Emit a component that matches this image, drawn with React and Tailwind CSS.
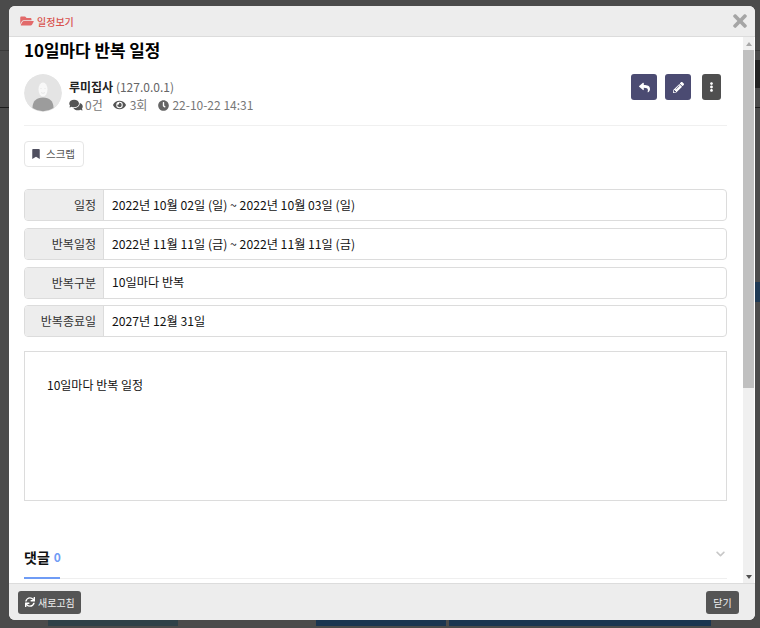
import { FaFolderOpen, FaComments, FaEye, FaClock, FaReply, FaPencilAlt, FaEllipsisV, FaBookmark, FaSync, FaTimes, FaChevronDown } from "react-icons/fa";

const rows = [
  { label: "일정", value: "2022년 10월 02일 (일) ~ 2022년 10월 03일 (일)" },
  { label: "반복일정", value: "2022년 11월 11일 (금) ~ 2022년 11월 11일 (금)" },
  { label: "반복구분", value: "10일마다 반복" },
  { label: "반복종료일", value: "2027년 12월 31일" },
];

function Avatar() {
  return (
    <svg width="38" height="38" viewBox="0 0 38 38" className="rounded-full shrink-0">
      <circle cx="19" cy="19" r="19" fill="#e4e4e4" />
      <path d="M8.500 34c0-7 4-10.500 10.500-10.500S29.500 27 29.500 34a19 19 0 0 1-21 0z" fill="#9c9c9c" />
      <ellipse cx="19" cy="15.500" rx="4.500" ry="7" fill="#f8f8f8" />
      <circle cx="17" cy="14.500" r="0.400" fill="#d0d0d0" />
      <circle cx="21" cy="14.500" r="0.400" fill="#d0d0d0" />
      <path d="M17 18.500c1.200 1 2.800 1 4 0" stroke="#d4d4d4" strokeWidth="0.500" fill="none" />
    </svg>
  );
}

function InfoRow({ label, value }) {
  return (
    <div className="flex h-8 border border-[#dcdcdc] rounded-[4px] overflow-hidden">
      <div className="w-[79px] shrink-0 bg-[#ededed] border-r border-[#dcdcdc] flex items-center justify-end pr-[7px] text-[#333]">
        {label}
      </div>
      <div className="flex-1 flex items-center pl-2 text-[12.2px] text-[#111]">{value}</div>
    </div>
  );
}

export default function App() {
  return (
    <div
      className="relative w-[760px] h-[628px] overflow-hidden bg-[#4b4b4b] pt-[6px] pl-[9px]"
      style={{ fontFamily: '"Noto Sans CJK KR", "Noto Sans", sans-serif' }}
    >
      {/* dimmed page behind the modal */}
      <div className="absolute left-0 top-[50px] w-full h-px bg-[#3a3a3a]" />
      <div className="absolute left-0 top-[107px] w-full h-px bg-[#1c1c1c]" />
      <div className="absolute left-[755px] top-[60px] w-[5px] h-[28px] bg-[#222]" />
      <div className="absolute left-[755px] top-[282px] w-[5px] h-[20px] bg-[#1f3a55]" />
      <div className="absolute left-[48px] top-[618px] w-[130px] h-[8px] bg-[#2f4148]" />
      <div className="absolute left-[316px] top-[618px] w-[130px] h-[8px] bg-[#1b3550]" />
      <div className="absolute left-[449px] top-[618px] w-[262px] h-[8px] bg-[#1b3550]" />

      <div className="relative w-[746px] h-[614px] flex flex-col rounded-[6px] overflow-hidden bg-white">
        {/* header */}
        <div className="h-[31px] shrink-0 bg-[#ededed] border-b border-[#dcdcdc] flex items-center justify-between pl-[11px] pr-[6px]">
          <div className="flex items-center gap-[3px] text-[#d9534f] text-[10px] font-medium">
            <FaFolderOpen className="w-[14px] h-[12px] text-[#e26a6a]" />
            <span>일정보기</span>
          </div>
          <FaTimes className="w-[18px] h-[20px] text-[#a5a5a5]" />
        </div>

        {/* body with scrollbar */}
        <div className="flex flex-1 min-h-0">
          <div className="flex-1 min-w-0 pl-[15px] pr-[7px] overflow-hidden text-[12px]">
            <h1 className="text-[16.900px] font-bold leading-[26px] text-black">10일마다 반복 일정</h1>

            <div className="flex items-start justify-between mt-[10px] pt-px pr-[6px] border-b border-[#f0f0f0] h-[53px] w-[703px]">
              <div className="flex items-start gap-[7px]">
                <Avatar />
                <div className="mt-[4px]">
                  <div className="leading-[18px]">
                    <span className="font-bold text-[#222]">루미집사</span>{" "}
                    <span className="text-[#666]">(127.0.0.1)</span>
                  </div>
                  <div className="flex items-center text-[#777] leading-[18px]">
                    <FaComments className="w-[14px] h-[12px] text-[#555] mr-[2px]" />
                    <span className="mr-[10px]">0건</span>
                    <FaEye className="w-[13px] h-[12px] text-[#555] mr-[4px]" />
                    <span className="mr-[11px]">3회</span>
                    <FaClock className="w-[11px] h-[11px] text-[#666] mr-[3px]" />
                    <span>22-10-22 14:31</span>
                  </div>
                </div>
              </div>
              <div className="flex items-center">
                <div className="w-[26px] h-[26px] rounded-[3px] bg-[#4b4b72] flex items-center justify-center text-white mr-2">
                  <FaReply className="w-[11px] h-[11px]" />
                </div>
                <div className="w-[26px] h-[26px] rounded-[3px] bg-[#4b4b72] flex items-center justify-center text-white mr-[11px]">
                  <FaPencilAlt className="w-[11px] h-[11px]" />
                </div>
                <div className="w-[19px] h-[26px] rounded-[3px] bg-[#4f4f4f] flex items-center justify-center text-white">
                  <FaEllipsisV className="w-[9px] h-[10px]" />
                </div>
              </div>
            </div>

            <div className="mt-[15px] inline-flex items-center h-[26px] w-[60px] pl-[7px] border border-[#e6e6e6] rounded-[4px] text-[#555] text-[10.500px]">
              <FaBookmark className="w-[8px] h-[10px] text-[#4f4f5f] mr-[6px]" />
              스크랩
            </div>

            <div className="flex flex-col gap-[6.670px] mt-[22.300px] w-[703px]">
              {rows.map((r) => (
                <InfoRow key={r.label} label={r.label} value={r.value} />
              ))}
            </div>

            <div className="mt-[14px] w-[703px] h-[150px] border border-[#dcdcdc] pt-[24px] pl-[22px] text-[#111]">
              10일마다 반복 일정
            </div>

            <div className="relative mt-[38px] w-[703px] h-[40px] border-b border-[#efefef]">
              <div className="inline-flex items-center gap-[4px] w-[36px] h-[40px] pb-[2px] border-b-2 border-[#6f9cf5] whitespace-nowrap">
                <span className="text-[14px] font-bold text-[#111]">댓글</span>
                <span className="text-[12px] font-bold text-[#6f9cf5]">0</span>
              </div>
              <FaChevronDown className="absolute right-0 top-[10px] w-[13px] h-[10px] text-[#c8c8c8]" />
            </div>
          </div>

          {/* scrollbar */}
          <div className="w-[11px] shrink-0 mr-px bg-[#f0f0f0] flex flex-col items-center">
            <div className="h-[13px] w-full flex items-center justify-center">
              <div className="w-0 h-0 border-x-[3px] border-x-transparent border-b-[4px] border-b-[#a8a8a8]" />
            </div>
            <div className="w-full h-[338px] bg-[#c0c0c0]" />
            <div className="flex-1" />
            <div className="h-[13px] w-full flex items-center justify-center">
              <div className="w-0 h-0 border-x-[3px] border-x-transparent border-t-[4px] border-t-[#505050]" />
            </div>
          </div>
        </div>

        {/* footer */}
        <div className="h-[37px] shrink-0 bg-[#ededed] border-t border-[#dcdcdc] flex items-center justify-between pl-[9px] pr-[16px] text-[10px] text-[#f0f0f0]">
          <div className="h-[23px] w-[63px] pl-[7px] rounded-[3px] bg-[#555] flex items-center gap-[3px]">
            <FaSync className="w-[10px] h-[10px] text-white" />
            새로고침
          </div>
          <div className="h-[23px] w-[33px] rounded-[3px] bg-[#555] flex items-center justify-center">닫기</div>
        </div>
      </div>
    </div>
  );
}
